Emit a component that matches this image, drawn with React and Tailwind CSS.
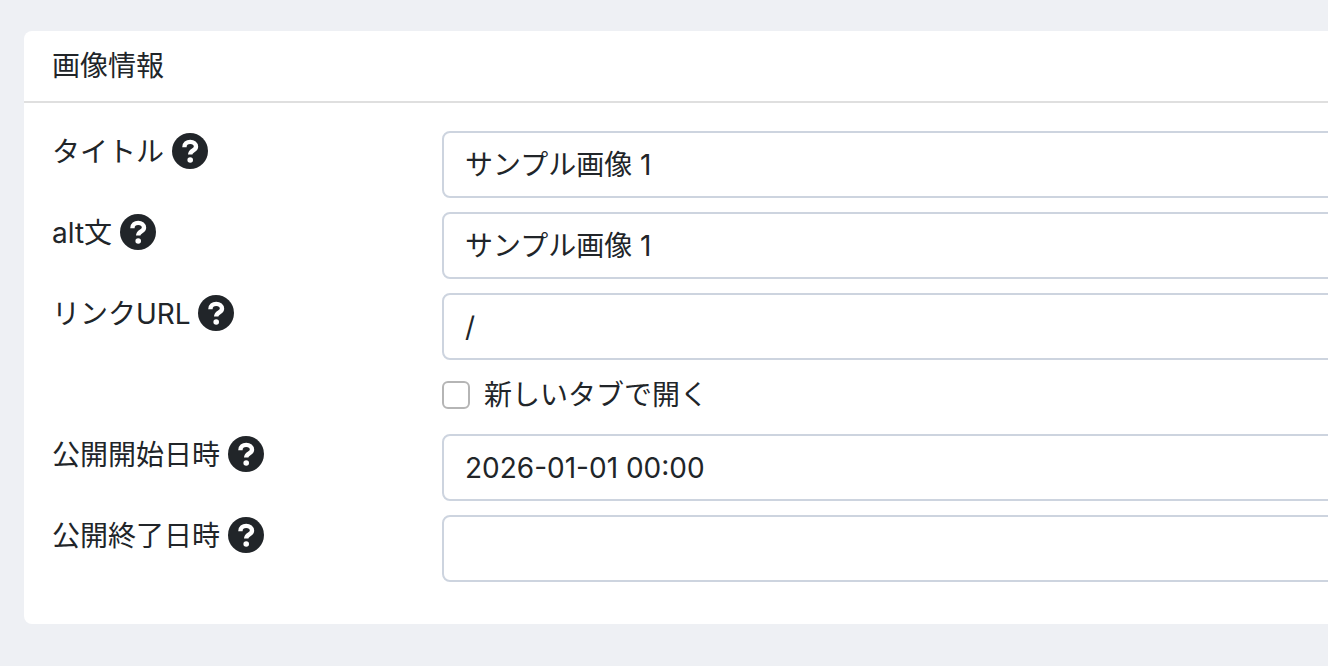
const fontClass = "font-['Inter','Noto_Sans_CJK_JP',sans-serif]";

const HelpIcon = () => (
    <svg viewBox="0 0 36 36" className="w-[36px] h-[36px] shrink-0">
        <circle cx="18" cy="18" r="18" fill="#212529" />
        <path d="M12.4 14.2C12.4 10.8 15 8.9 18.2 8.9C21.4 8.9 24 10.7 24 13.7C24 17.6 18.2 17.2 18.2 21.6" fill="none" stroke="#fff" strokeWidth="4.4" />
        <circle cx="18.2" cy="27" r="2.8" fill="#fff" />
    </svg>
);

const Label = ({ text }) => (
    <div className="w-[390px] shrink-0 flex items-start gap-[7.5px] h-[67px] pt-[2px]">
        <span className="text-[28px] leading-[38px] text-[#212529]">{text}</span>
        <HelpIcon />
    </div>
);

const Field = ({ label, value }) => (
    <div className="flex mb-[14px]">
        <Label text={label} />
        <div className="w-[900px] shrink-0 h-[67px] border-2 border-[#cdd4df] rounded-[8px] bg-white pl-[21px] flex items-center text-[28px] text-[#212529]">
            {value}
        </div>
    </div>
);

export default function App() {
    return (
        <div className={`w-[1328px] h-[666px] overflow-hidden bg-[#eef0f4] pt-[31px] pl-[24px] ${fontClass}`}>
            <div className="w-[1400px] h-[593px] bg-white rounded-[8px]">
                <div className="h-[72px] border-b-2 border-[#dfdfdf] pl-[28px] flex items-center">
                    <h2 className="text-[28px] text-[#212529]">画像情報</h2>
                </div>
                <div className="pl-[28px] pt-[28px]">
                    <Field label="タイトル" value="サンプル画像 1" />
                    <Field label="alt文" value="サンプル画像 1" />
                    <div className="flex">
                        <Label text="リンクURL" />
                        <div className="w-[900px] shrink-0 h-[67px] border-2 border-[#cdd4df] rounded-[8px] bg-white pl-[21px] flex items-center text-[28px] text-[#212529]">
                            /
                        </div>
                    </div>
                    <div className="flex items-center h-[74px] pb-[4px] pl-[390px] gap-[14px]">
                        <span className="w-[28px] h-[28px] border-2 border-[#b5b5b5] rounded-[6px] bg-white shrink-0"></span>
                        <span className="text-[28px] text-[#212529]">新しいタブで開く</span>
                    </div>
                    <Field label="公開開始日時" value="2026-01-01 00:00" />
                    <Field label="公開終了日時" value="" />
                </div>
            </div>
        </div>
    );
}
